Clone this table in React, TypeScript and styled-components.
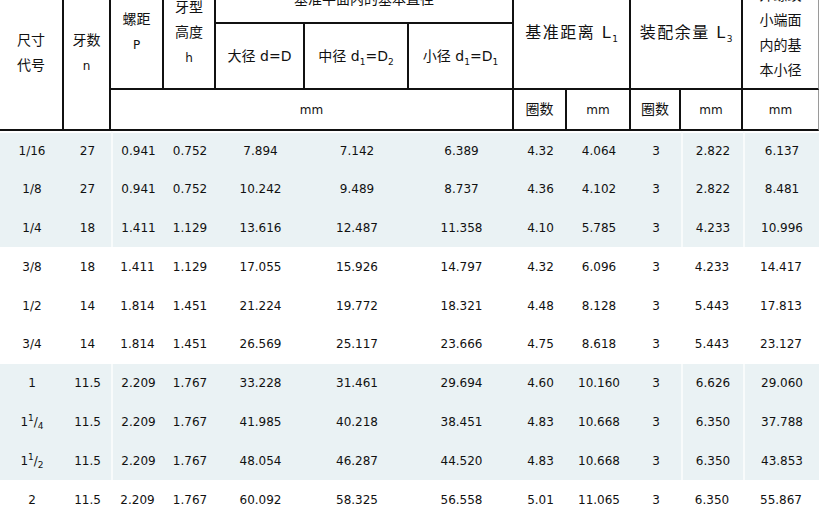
import styled, { createGlobalStyle } from "styled-components";

const GlobalStyle = createGlobalStyle`
  html, body {
    margin: 0;
    padding: 0;
    background: #ffffff;
    overflow: hidden;
  }
`;

const Page = styled.div`
  width: 820px;
  height: 512px;
  overflow: hidden;
  font-family: "DejaVu Sans", "Noto Sans CJK SC", sans-serif;
  color: #111111;
`;

const Table = styled.table`
  width: 819px;
  margin-top: -23px;
  table-layout: fixed;
  border-collapse: separate;
  border-spacing: 0;
`;

const HeadRow = styled.tr<{ $h: number }>`
  height: ${(p) => p.$h}px;
`;

const HeadCell = styled.th<{ $last?: boolean; $size?: number }>`
  padding: 0;
  border-right: ${(p) => (p.$last ? "1px solid #9a9a9a" : "2px solid #111111")};
  border-bottom: 2px solid #111111;
  font-weight: normal;
  font-size: ${(p) => p.$size ?? 14}px;
  letter-spacing: ${(p) => (p.$size ? "1.5px" : "0")};
  line-height: 25px;
  text-align: center;
  vertical-align: middle;
  color: #111111;
`;

const Unit = styled.span`
  font-size: 12px;
`;

const Sub = styled.sub`
  font-size: 9px;
  line-height: 0;
  letter-spacing: 0;
`;

const Sup = styled.sup`
  font-size: 9px;
  line-height: 0;
`;

const BodyRow = styled.tr<{ $shade: boolean }>`
  height: 38.8px;
  background: ${(p) => (p.$shade ? "#eaf2f4" : "#ffffff")};

  &:first-child td {
    border-top: 2px solid #ffffff;
  }
`;

const Cell = styled.td<{ $split?: boolean }>`
  padding: 0;
  font-size: 12px;
  text-align: center;
  vertical-align: middle;
  white-space: nowrap;
  color: #111111;
  border-left: ${(p) => (p.$split ? "2px solid #f8fbfb" : "0")};
`;

const widths = [64, 47, 53, 52, 89, 104, 105, 53, 64, 50, 62, 76];
const splitCols = [2, 10, 11];

type Size = string | { whole: string; num: string; den: string };

const rows: [Size, ...string[]][] = [
  ["1/16", "27", "0.941", "0.752", "7.894", "7.142", "6.389", "4.32", "4.064", "3", "2.822", "6.137"],
  ["1/8", "27", "0.941", "0.752", "10.242", "9.489", "8.737", "4.36", "4.102", "3", "2.822", "8.481"],
  ["1/4", "18", "1.411", "1.129", "13.616", "12.487", "11.358", "4.10", "5.785", "3", "4.233", "10.996"],
  ["3/8", "18", "1.411", "1.129", "17.055", "15.926", "14.797", "4.32", "6.096", "3", "4.233", "14.417"],
  ["1/2", "14", "1.814", "1.451", "21.224", "19.772", "18.321", "4.48", "8.128", "3", "5.443", "17.813"],
  ["3/4", "14", "1.814", "1.451", "26.569", "25.117", "23.666", "4.75", "8.618", "3", "5.443", "23.127"],
  ["1", "11.5", "2.209", "1.767", "33.228", "31.461", "29.694", "4.60", "10.160", "3", "6.626", "29.060"],
  [{ whole: "1", num: "1", den: "4" }, "11.5", "2.209", "1.767", "41.985", "40.218", "38.451", "4.83", "10.668", "3", "6.350", "37.788"],
  [{ whole: "1", num: "1", den: "2" }, "11.5", "2.209", "1.767", "48.054", "46.287", "44.520", "4.83", "10.668", "3", "6.350", "43.853"],
  ["2", "11.5", "2.209", "1.767", "60.092", "58.325", "56.558", "5.01", "11.065", "3", "6.350", "55.867"],
];

function SizeLabel({ v }: { v: Size }) {
  if (typeof v === "string") return <>{v}</>;
  return (
    <>
      {v.whole}
      <Sup>{v.num}</Sup>/<Sub>{v.den}</Sub>
    </>
  );
}

export default function App(): JSX.Element {
  return (
    <Page>
      <GlobalStyle />
      <Table>
        <colgroup>
          {widths.map((w, i) => (
            <col key={i} style={{ width: w }} />
          ))}
        </colgroup>
        <thead>
          <HeadRow $h={47}>
            <HeadCell rowSpan={3}>
              尺寸
              <br />
              代号
            </HeadCell>
            <HeadCell rowSpan={3}>
              牙数
              <br />
              <Unit>n</Unit>
            </HeadCell>
            <HeadCell rowSpan={2}>
              螺距
              <br />
              <Unit>P</Unit>
            </HeadCell>
            <HeadCell rowSpan={2}>
              牙型
              <br />
              高度
              <br />
              <Unit>h</Unit>
            </HeadCell>
            <HeadCell colSpan={3}>基准平面内的基本直径</HeadCell>
            <HeadCell colSpan={2} rowSpan={2} $size={16}>
              基准距离 L<Sub>1</Sub>
            </HeadCell>
            <HeadCell colSpan={2} rowSpan={2} $size={16}>
              装配余量 L<Sub>3</Sub>
            </HeadCell>
            <HeadCell rowSpan={2} $last>
              外螺纹
              <br />
              小端面
              <br />
              内的基
              <br />
              本小径
            </HeadCell>
          </HeadRow>
          <HeadRow $h={66}>
            <HeadCell>大径 d=D</HeadCell>
            <HeadCell>
              中径 d<Sub>1</Sub>=D<Sub>2</Sub>
            </HeadCell>
            <HeadCell>
              小径 d<Sub>1</Sub>=D<Sub>1</Sub>
            </HeadCell>
          </HeadRow>
          <HeadRow $h={41}>
            <HeadCell colSpan={5}>
              <Unit>mm</Unit>
            </HeadCell>
            <HeadCell>圈数</HeadCell>
            <HeadCell>
              <Unit>mm</Unit>
            </HeadCell>
            <HeadCell>圈数</HeadCell>
            <HeadCell>
              <Unit>mm</Unit>
            </HeadCell>
            <HeadCell $last>
              <Unit>mm</Unit>
            </HeadCell>
          </HeadRow>
        </thead>
        <tbody>
          {rows.map((r, i) => {
            const shade = Math.floor(i / 3) % 2 === 0 && i < 9;
            return (
              <BodyRow key={i} $shade={shade}>
                {r.map((v, j) => (
                  <Cell key={j} $split={shade && splitCols.includes(j)}>
                    {j === 0 ? <SizeLabel v={v as Size} /> : (v as string)}
                  </Cell>
                ))}
              </BodyRow>
            );
          })}
        </tbody>
      </Table>
    </Page>
  );
}
